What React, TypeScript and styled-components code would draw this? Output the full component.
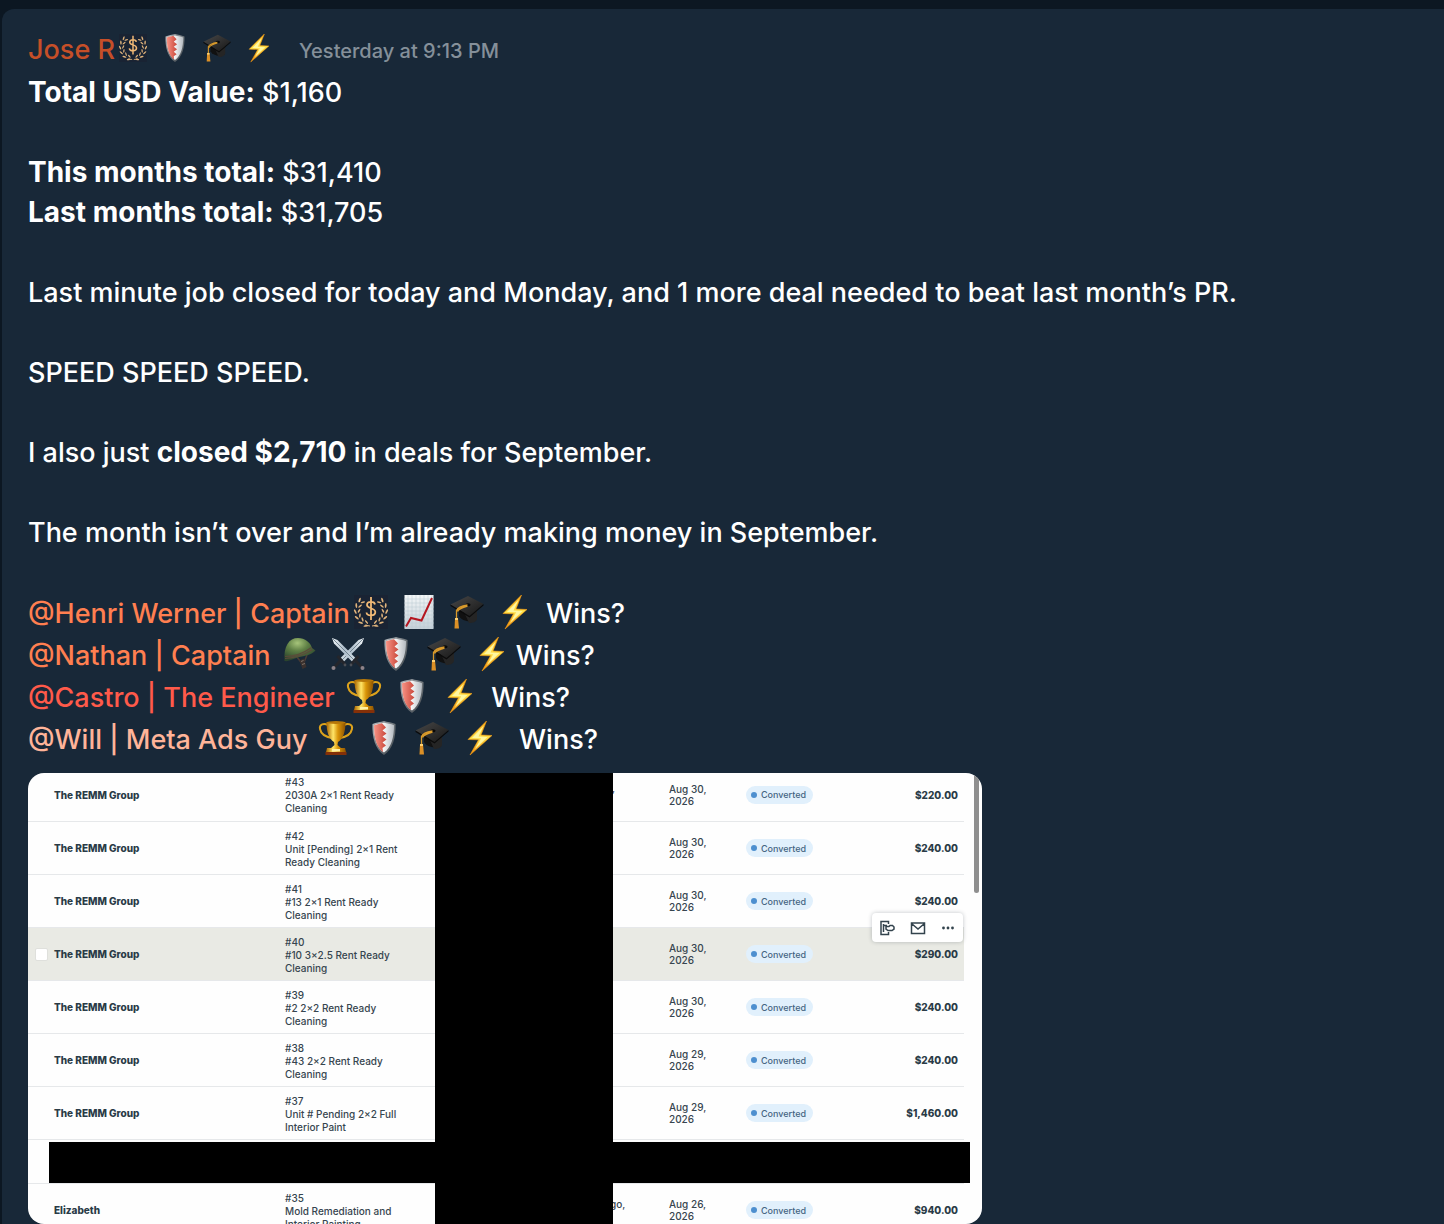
import React from "react";
import styled, { createGlobalStyle } from "styled-components";

const GlobalStyle = createGlobalStyle`
  *, *::before, *::after { box-sizing: border-box; }
  html { background: #0c1722; }
  body { margin: 0; font-family: Inter, "Liberation Sans", sans-serif; color: #fff; }
`;

const Page = styled.main`
  min-height: 100vh;
  padding: 9px 0 0 2px;
  background: #0c1722;
`;

const Message = styled.article`
  min-height: calc(100vh - 9px);
  padding: 20px 26px 0;
  border-top-left-radius: 12px;
  background: #182838;
`;

const Header = styled.header`
  display: flex;
  align-items: center;
  height: 44px;
  padding-bottom: 2px;
  font-size: 27px;
  line-height: 40px;
`;

const Author = styled.a`
  margin-right: 4px;
  color: #c64f28;
  font-weight: 500;
  text-decoration: none;
`;

const Time = styled.time`
  margin-left: 26px;
  padding-top: 2px;
  color: #85909a;
  font-size: 20px;
  font-weight: 500;
`;

const Badges = styled.span<{ $size: number; $start?: number }>`
  display: inline-flex;
  align-items: center;
  gap: 14px;
  margin-left: ${(p) => p.$start ?? 0}px;
  padding-bottom: 5px;
  svg { display: block; flex: none; width: ${(p) => p.$size}px; height: ${(p) => p.$size}px; overflow: visible; }
`;

const Body = styled.div`
  font-size: 27px;
  font-weight: 500;
  line-height: 40px;
  p { margin: 0 0 40px; }
  strong { font-size: 28px; font-weight: 700; line-height: 28px; }
`;

const MentionList = styled.ul`
  margin: 0 0 12px;
  padding: 0;
  list-style: none;
`;

const MentionRow = styled.li`
  display: flex;
  align-items: center;
  height: 42px;
  white-space: pre;
`;

const Mention = styled.a<{ $color: string }>`
  color: ${(p) => p.$color};
  font-weight: 500;
  text-decoration: none;
`;

const Attachment = styled.figure`
  position: relative;
  width: 100%;
  max-width: 954px;
  height: 451px;
  margin: 0;
  padding-right: 18px;
  overflow: hidden;
  border-radius: 16px;
  background: #fefefe;
  color: #36454f;
`;

const Table = styled.table`
  width: 100%;
  margin-top: -5px;
  border-collapse: collapse;
  table-layout: fixed;
  font-size: 10px;
  font-weight: 500;
  line-height: 13px;
`;

const Row = styled.tr<{ $hover?: boolean; $short?: boolean }>`
  height: ${(p) => (p.$short ? 44 : 53)}px;
  background: ${(p) => (p.$hover ? "#e9eae4" : "transparent")};
  border-bottom: 1px solid #e6e8ea;
`;

const Cell = styled.td`
  padding: 1px 0 0;
  vertical-align: middle;
`;

const NameCell = styled.th`
  padding: 2px 0 0;
  color: #2a3b47;
  font-weight: 800;
  text-align: left;
`;

const TitleCell = styled(Cell)`
  padding-top: 3px;
  padding-right: 30px;
`;

const AddressCell = styled(Cell)<{ $indent: number }>`
  padding-left: ${(p) => p.$indent}px;
  padding-bottom: 12px;
`;

const DateCell = styled(Cell)`
  padding-right: 30px;
  line-height: 12px;
`;

const AmountCell = styled(Cell)`
  padding-top: 2px;
  padding-right: 6px;
  color: #2a3b47;
  font-weight: 800;
  text-align: right;
`;

const Pill = styled.span`
  display: inline-flex;
  align-items: center;
  gap: 4px;
  height: 18px;
  padding: 0 7px 0 5px;
  border-radius: 9px;
  background: #e1f0fc;
  color: #456583;
  font-size: 9px;
  vertical-align: middle;
  &::before {
    content: "";
    width: 6px;
    height: 6px;
    border-radius: 50%;
    background: #4d8fcf;
  }
`;

const RowCheck = styled.input`
  display: block;
  appearance: none;
  width: 13px;
  height: 13px;
  margin: 0 0 0 7px;
  border: 1px solid #dfe0dc;
  border-radius: 2px;
  background: #fff;
`;

const ColumnRedaction = styled.div`
  position: absolute;
  top: 0;
  bottom: 0;
  left: 407px;
  width: 178px;
  background: #000;
`;

const RowRedaction = styled.div`
  position: absolute;
  top: 369px;
  left: 21px;
  right: 12px;
  height: 41px;
  background: #000;
`;

const RowActions = styled.div`
  position: absolute;
  top: 140px;
  right: 19px;
  display: flex;
  align-items: center;
  justify-content: space-between;
  width: 91px;
  height: 29px;
  padding: 0 7px;
  border-radius: 4px;
  background: #fff;
  box-shadow: 0 0 4px rgba(40, 50, 60, 0.28);
`;

const IconButton = styled.button`
  display: flex;
  padding: 0;
  border: 0;
  background: none;
  color: #33434d;
  svg { width: 16px; height: 16px; }
`;

const ScrollThumb = styled.div`
  position: absolute;
  top: 0;
  right: 3px;
  width: 5px;
  height: 120px;
  border-radius: 0 0 3px 3px;
  background: #8f8f8f;
`;

const HiddenSvg = styled.svg`
  position: absolute;
`;

const Defs = () => (
  <HiddenSvg width="0" height="0" aria-hidden="true">
    <defs>
      <linearGradient id="bolt" x1="0" y1="0" x2="0" y2="1">
        <stop offset="0" stopColor="#ffb31e" />
        <stop offset=".5" stopColor="#ffe14a" />
        <stop offset="1" stopColor="#f58e0b" />
      </linearGradient>
      <linearGradient id="rim" x1="0" y1="0" x2="1" y2="1">
        <stop offset="0" stopColor="#b9bdc1" />
        <stop offset=".5" stopColor="#70777c" />
        <stop offset="1" stopColor="#3e454b" />
      </linearGradient>
      <linearGradient id="shieldWhite" x1="0" y1="0" x2="1" y2="0">
        <stop offset=".4" stopColor="#fff" />
        <stop offset="1" stopColor="#b5bbc1" />
      </linearGradient>
      <linearGradient id="shieldRed" x1="0" y1="0" x2="1" y2="0">
        <stop offset="0" stopColor="#f79385" />
        <stop offset="1" stopColor="#c9473a" />
      </linearGradient>
      <linearGradient id="capTop" x1="0" y1="0" x2="1" y2="1">
        <stop offset="0" stopColor="#484848" />
        <stop offset="1" stopColor="#171717" />
      </linearGradient>
      <linearGradient id="gold" x1="0" y1="0" x2="1" y2="0">
        <stop offset="0" stopColor="#a96500" />
        <stop offset=".35" stopColor="#ffe567" />
        <stop offset=".6" stopColor="#d99509" />
        <stop offset="1" stopColor="#8d5200" />
      </linearGradient>
      <radialGradient id="helmet" cx=".42" cy=".22" r=".75">
        <stop offset="0" stopColor="#a6c47a" />
        <stop offset=".45" stopColor="#5f8045" />
        <stop offset="1" stopColor="#2b442d" />
      </radialGradient>
      <linearGradient id="blade" x1="0" y1="0" x2="1" y2="0">
        <stop offset="0" stopColor="#f0f5f8" />
        <stop offset=".5" stopColor="#aebecb" />
        <stop offset="1" stopColor="#d8e2e8" />
      </linearGradient>
      <linearGradient id="paper" x1="0" y1="0" x2="0" y2="1">
        <stop offset="0" stopColor="#f3f6f7" />
        <stop offset="1" stopColor="#c5d0d8" />
      </linearGradient>
    </defs>
  </HiddenSvg>
);

const leaves = [0, 1, 2, 3, 4, 5].map((i) => {
  const angle = 112 + i * 23;
  const rad = (angle * Math.PI) / 180;
  return { x: 17 + 14 * Math.cos(rad), y: 16 + 14 * Math.sin(rad), turn: angle + 90 };
});

const LaurelSide = () => (
  <>
    {leaves.map((l) => (
      <g key={l.turn} transform={`translate(${l.x} ${l.y}) rotate(${l.turn})`} fill="#e0b47c">
        <ellipse cx="0" cy="-1.900" rx="2.500" ry="0.900" transform="rotate(-28)" />
        <ellipse cx="1" cy="1.800" rx="2.300" ry="0.800" transform="rotate(28)" />
      </g>
    ))}
    <path d="M16 31C14.500 31 13 30.500 11.500 29.800" fill="none" stroke="#e0b47c" strokeWidth="1" />
  </>
);

const Laurel = () => (
  <svg viewBox="0 0 34 34" role="img" aria-label="laurel">
    <rect width="34" height="34" fill="#192333" />
    <LaurelSide />
    <g transform="translate(34 0) scale(-1 1)"><LaurelSide /></g>
    <path d="M17 2V25M21 9.500C20.500 6 13 6 13 10C13 14 21.300 12.500 21.300 17C21.300 21.500 13 21.500 12.500 17.500" fill="none" stroke="#f0b976" strokeWidth="1.800" />
  </svg>
);

const Shield = () => (
  <svg viewBox="0 0 34 34" role="img" aria-label="shield">
    <path d="M17 0C20 1 25 1.500 28.500 3C29 16 26 28 17 34C8 28 5 16 5.500 3C9 1.500 14 1 17 0Z" fill="url(#rim)" />
    <path d="M17 1.800C20 2.500 24 3 27 4.200C27 16 24.500 26.500 17 31.500C9.500 26.500 7 16 7 4.200C10 3 14 2.500 17 1.800Z" fill="url(#shieldWhite)" />
    <path d="M15 2.200C12 2.800 9 3.500 7 4.200C7 16 9.500 26.500 16 31L15.500 27L19 24.500L15.500 21.500L19.500 18.500L15.500 15.500L19.500 12.500L15.500 9.500L19 6.500Z" fill="url(#shieldRed)" />
  </svg>
);

const Cap = () => (
  <svg viewBox="0 0 34 34" role="img" aria-label="graduation cap">
    <path d="M9 14V21C12 26 20 28 26 25L27 13Z" fill="#111" />
    <path d="M14 17L19 28C23 28 26 27 27 24V12Z" fill="#252525" />
    <path d="M0.500 9.500L18 1L33.500 9L19.500 21Z" fill="url(#capTop)" />
    <path d="M0.500 9.500L19.500 21L33.500 9V10.500L19.500 22.500L0.500 11Z" fill="#0b0b0b" />
    <ellipse cx="18" cy="9.800" rx="2.600" ry="1.500" fill="#090909" />
    <path d="M17.500 10C12 11 7.500 13 6.500 15.500V25M17.500 11C12 12.500 8.500 14 7.500 16.500" fill="none" stroke="#d99a2b" strokeWidth="1.300" />
    <path d="M5 23.500H8L9 33.500H4.500Z" fill="#dc9026" />
    <path d="M5 23H8V25H5Z" fill="#ffd273" />
  </svg>
);

const Bolt = () => (
  <svg viewBox="0 0 34 34" role="img" aria-label="lightning">
    <path d="M23.500 0L5 18.500L15.500 18.800L7 34L29 14.500L18 14Z" fill="url(#bolt)" stroke="#f79b10" strokeWidth="0.600" />
    <path d="M20.500 5L9 17L18.200 17.200L12 28L24.500 16L15.500 15.500Z" fill="#fff7a0" />
  </svg>
);

const Chart = () => (
  <svg viewBox="0 0 34 34" role="img" aria-label="chart increasing">
    <rect x="2.500" width="29" height="34" fill="url(#paper)" />
    <path d="M6 0V34M10 0V34M14 0V34M18 0V34M22 0V34M26 0V34M30 0V34M2 4H32M2 8H32M2 12H32M2 16H32M2 20H32M2 24H32M2 28H32M2 32H32" stroke="#b8c8d3" strokeWidth="0.500" />
    <path d="M4 31.500L9 23L19.500 25.500L30 3" fill="none" stroke="#b51620" strokeWidth="2" />
  </svg>
);

const Helmet = () => (
  <svg viewBox="0 0 34 34" role="img" aria-label="military helmet">
    <path d="M14 20L20 28M24 18L20 28" fill="none" stroke="#4a3c36" strokeWidth="1.500" />
    <path d="M16.500 23.500L21 21.500L23.500 30L19.500 32Z" fill="#3a302d" />
    <path d="M18 24.500L20.500 23.500M19 27.500L22 26.500" stroke="#85786e" strokeWidth="0.900" />
    <path d="M1.500 24C0.500 9 6 1 15 1C22 1 27.500 5.500 29 11L32.500 13.500C30 16.500 25 18.500 19 19.500C11 21 6 25 1.500 24Z" fill="url(#helmet)" />
    <path d="M2 19.500C11 19.500 21 16 28.500 10.500M2 21.500C11 21 21 18 29.500 12.500" fill="none" stroke="#5c4a3a" strokeWidth="1.200" />
  </svg>
);

const Sword = () => (
  <>
    <path d="M1 1L6.500 3L26 22.500L22.500 26L3 6.500Z" fill="url(#blade)" />
    <path d="M2 2L24 24" stroke="#60717e" strokeWidth="0.800" />
    <path d="M20 27.500L27.500 19M24.500 23.500L31 30.500" fill="none" stroke="#24262c" strokeWidth="3" />
    <circle cx="31.500" cy="31" r="2" fill="#8d8389" />
    <circle cx="20" cy="28" r="1.400" fill="#4b4e55" />
  </>
);

const Swords = () => (
  <svg viewBox="0 0 34 34" role="img" aria-label="crossed swords">
    <g transform="translate(34 0) scale(-1 1)"><Sword /></g>
    <Sword />
  </svg>
);

const Trophy = () => (
  <svg viewBox="0 0 34 34" role="img" aria-label="trophy">
    <path d="M9 4C5 2 0 3 1 8C2 13 7 16 13 17M25 4C29 2 34 3 33 8C32 13 27 16 21 17" fill="none" stroke="#dca21c" strokeWidth="2" />
    <path d="M7.500 1H26.500C26.500 11 24 18 19 21L18.500 24L22 27H12L15.500 24L15 21C10 18 7.500 11 7.500 1Z" fill="url(#gold)" />
    <ellipse cx="17" cy="1.500" rx="9.500" ry="1.500" fill="#b77809" />
    <path d="M8 27H26L27 31H7Z" fill="url(#gold)" />
    <path d="M6.500 31H27.500V34H6.500Z" fill="#843008" />
    <path d="M13 28H21V30.500H13Z" fill="#fff1a6" />
  </svg>
);

const icons = { laurel: Laurel, shield: Shield, cap: Cap, bolt: Bolt, chart: Chart, helmet: Helmet, swords: Swords, trophy: Trophy };
type IconName = keyof typeof icons;

const BadgeRow = ({ names, size, start }: { names: IconName[]; size: number; start?: number }) => (
  <Badges $size={size} $start={start}>
    {names.map((n) => {
      const Icon = icons[n];
      return <Icon key={n} />;
    })}
  </Badges>
);

const mentions: { name: string; color: string; badges: IconName[]; start: number; tail: string }[] = [
  { name: "@Henri Werner | Captain", color: "#ff7f50", badges: ["laurel", "chart", "cap", "bolt"], start: 4, tail: "  Wins?" },
  { name: "@Nathan | Captain", color: "#ff7f50", badges: ["helmet", "swords", "shield", "cap", "bolt"], start: 12, tail: " Wins?" },
  { name: "@Castro | The Engineer", color: "#ff5a4a", badges: ["trophy", "shield", "bolt"], start: 12, tail: "  Wins?" },
  { name: "@Will | Meta Ads Guy", color: "#ffb499", badges: ["trophy", "shield", "cap", "bolt"], start: 12, tail: "   Wins?" },
];

interface Job {
  id: string;
  client: string;
  title: string;
  date: string;
  amount: string;
  hover?: boolean;
  address?: string;
  indent?: number;
}

const jobs: Job[] = [
  { id: "#43", client: "The REMM Group", title: "2030A 2×1 Rent Ready Cleaning", date: "Aug 30, 2026", amount: "$220.00", address: ",", indent: 177 },
  { id: "#42", client: "The REMM Group", title: "Unit [Pending] 2×1 Rent Ready Cleaning", date: "Aug 30, 2026", amount: "$240.00" },
  { id: "#41", client: "The REMM Group", title: "#13 2×1 Rent Ready Cleaning", date: "Aug 30, 2026", amount: "$240.00" },
  { id: "#40", client: "The REMM Group", title: "#10 3×2.5 Rent Ready Cleaning", date: "Aug 30, 2026", amount: "$290.00", hover: true },
  { id: "#39", client: "The REMM Group", title: "#2 2×2 Rent Ready Cleaning", date: "Aug 30, 2026", amount: "$240.00" },
  { id: "#38", client: "The REMM Group", title: "#43 2×2 Rent Ready Cleaning", date: "Aug 29, 2026", amount: "$240.00" },
  { id: "#37", client: "The REMM Group", title: "Unit # Pending 2×2 Full Interior Paint", date: "Aug 29, 2026", amount: "$1,460.00" },
];

const lastJob: Job = { id: "#35", client: "Elizabeth", title: "Mold Remediation and Interior Painting", date: "Aug 26, 2026", amount: "$940.00", address: "go,", indent: 175 };

const JobRow = ({ job }: { job: Job }) => (
  <Row $hover={job.hover}>
    <Cell>{job.hover && <RowCheck type="checkbox" aria-label={`Select ${job.id}`} />}</Cell>
    <NameCell scope="row">{job.client}</NameCell>
    <TitleCell>
      {job.id}
      <br />
      {job.title}
    </TitleCell>
    <AddressCell $indent={job.indent ?? 0}>{job.address}</AddressCell>
    <DateCell>{job.date}</DateCell>
    <Cell><Pill>Converted</Pill></Cell>
    <AmountCell>{job.amount}</AmountCell>
  </Row>
);

export default function App() {
  return (
    <Page>
      <GlobalStyle />
      <Defs />
      <Message>
        <Header>
          <Author href="#jose">Jose R</Author>
          <BadgeRow names={["laurel", "shield", "cap", "bolt"]} size={28} />
          <Time>Yesterday at 9:13 PM</Time>
        </Header>
        <Body>
          <p><strong>Total USD Value:</strong> $1,160</p>
          <p>
            <strong>This months total:</strong> $31,410
            <br />
            <strong>Last months total:</strong> $31,705
          </p>
          <p>Last minute job closed for today and Monday, and 1 more deal needed to beat last month’s PR.</p>
          <p>SPEED SPEED SPEED.</p>
          <p>I also just <strong>closed $2,710</strong> in deals for September.</p>
          <p>The month isn’t over and I’m already making money in September.</p>
          <MentionList>
            {mentions.map((m) => (
              <MentionRow key={m.name}>
                <Mention href="#profile" $color={m.color}>{m.name}</Mention>
                <BadgeRow names={m.badges} size={34} start={m.start} />
                <span>{m.tail}</span>
              </MentionRow>
            ))}
          </MentionList>
        </Body>
        <Attachment>
          <Table>
            <colgroup>
              <col style={{ width: 26 }} />
              <col style={{ width: 231 }} />
              <col style={{ width: 150 }} />
              <col style={{ width: 234 }} />
              <col style={{ width: 77 }} />
              <col style={{ width: 110 }} />
              <col />
            </colgroup>
            <tbody>
              {jobs.map((j) => <JobRow key={j.id} job={j} />)}
              <Row $short><Cell colSpan={7} /></Row>
              <JobRow job={lastJob} />
            </tbody>
          </Table>
          <ColumnRedaction />
          <RowRedaction />
          <RowActions>
            <IconButton aria-label="Convert">
              <svg viewBox="0 0 16 16" fill="none" stroke="currentColor" strokeWidth="1.500">
                <path d="M9.500 4V1.500H2V14.500H9.500V12M4.500 4V12M4.500 5.500H8" />
                <path d="M7 6.500H10L11 5.500H13.500L15 7V9L13 10.500H9L7 9Z" />
              </svg>
            </IconButton>
            <IconButton aria-label="Email">
              <svg viewBox="0 0 16 16" fill="none" stroke="currentColor" strokeWidth="1.500">
                <path d="M1.500 3H14.500V13.500H1.500ZM1.500 3.500L8 9L14.500 3.500" />
              </svg>
            </IconButton>
            <IconButton aria-label="More">
              <svg viewBox="0 0 16 16" fill="currentColor">
                <circle cx="3.500" cy="8" r="1.400" />
                <circle cx="8" cy="8" r="1.400" />
                <circle cx="12.500" cy="8" r="1.400" />
              </svg>
            </IconButton>
          </RowActions>
          <ScrollThumb />
        </Attachment>
      </Message>
    </Page>
  );
}
